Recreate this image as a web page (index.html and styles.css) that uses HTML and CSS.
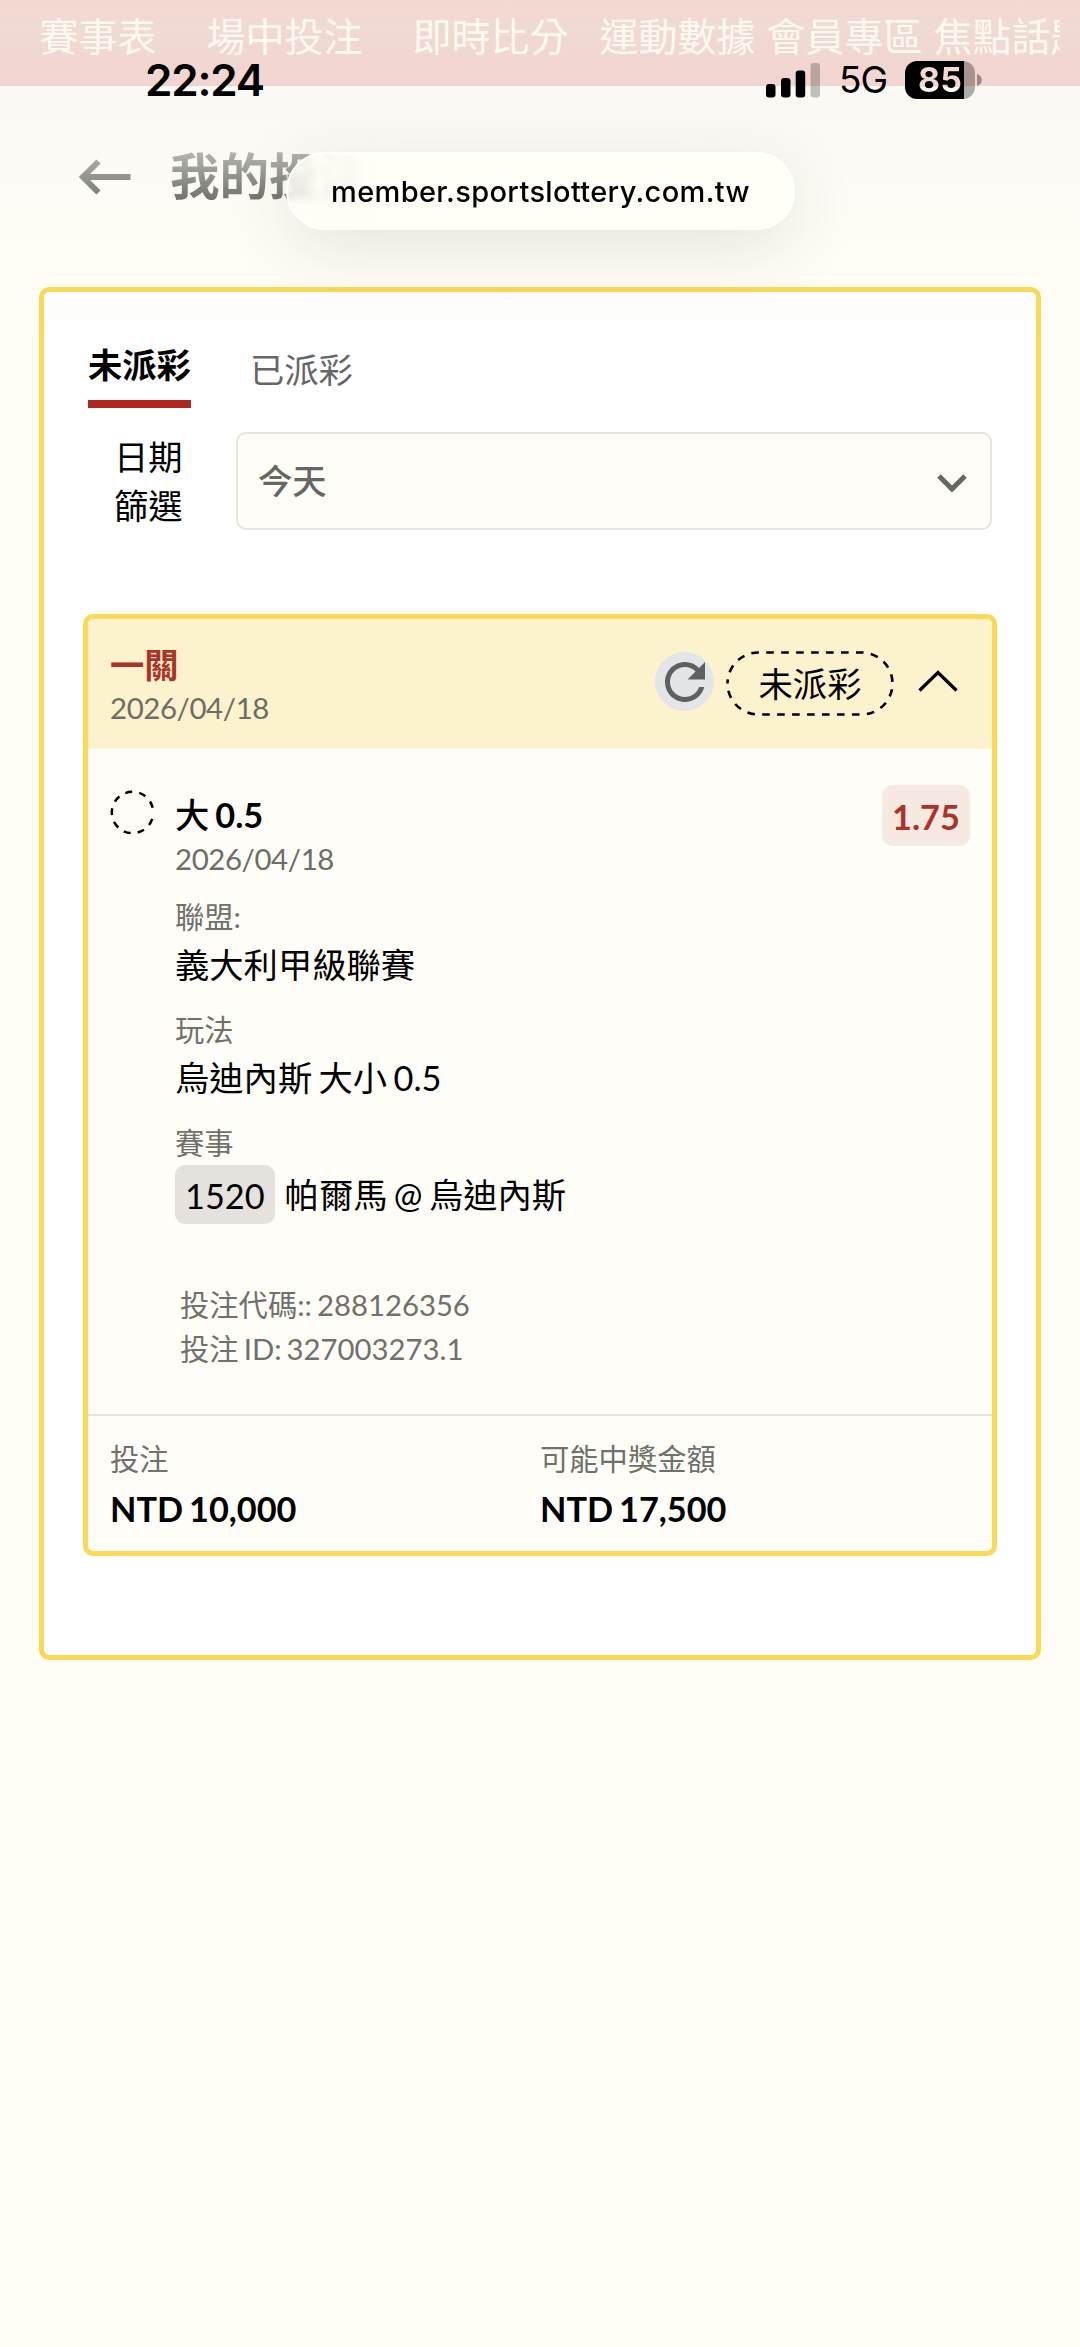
FILE: index.html
```html
<!DOCTYPE html>
<html lang="zh-Hant">
<head>
<meta charset="utf-8">
<title>我的投注</title>
<link rel="stylesheet" href="styles.css">
</head>
<body>
<nav class="site-nav">
  <span class="nav-item">賽事表</span>
  <span class="nav-item">場中投注</span>
  <span class="nav-item">即時比分</span>
  <span class="nav-item">運動數據</span>
  <span class="nav-item">會員專區</span>
  <span class="nav-item">焦點話題</span>
</nav>

<div class="status-bar">
  <span class="clock">22:24</span>
  <div class="status-icons">
    <svg class="signal" viewBox="0 0 55 36"><rect x="0" y="22" width="9.5" height="13.5" rx="3"/><rect x="15" y="16" width="9.5" height="19.5" rx="3"/><rect x="29.7" y="8.500" width="9.500" height="27" rx="3"/><rect x="44.500" y="1" width="9.500" height="34.500" rx="3" opacity=".23"/></svg>
    <span class="network">5G</span>
    <div class="battery"><span class="battery-level">85</span></div>
    <svg class="battery-cap" viewBox="0 0 5 12"><path d="M0 0C6.500 2 6.500 10 0 12Z"/></svg>
  </div>
</div>

<header class="page-head">
  <svg class="back" viewBox="0 0 54 36">
    <defs><linearGradient id="fade" gradientUnits="userSpaceOnUse" x1="0" y1="0" x2="0" y2="36"><stop offset="0" stop-color="#aaa9a6"/><stop offset="1" stop-color="#7f7f7b"/></linearGradient></defs>
    <path d="M20.500 2.500 5 18 20.500 33.500M5 18H52.500" fill="none" stroke="url(#fade)" stroke-width="6"/>
  </svg>
  <h1 class="title">我的投注</h1>
</header>
<div class="url-pill">member.sportslottery.com.tw</div>

<main class="panel">
  <div class="tabs">
    <span class="tab tab-active">未派彩</span>
    <span class="tab">已派彩</span>
  </div>
  <div class="filter">
    <span class="filter-label">日期<br>篩選</span>
    <div class="select">
      <span>今天</span>
      <svg class="select-arrow" viewBox="0 0 30 18"><path d="M2 2 15 15 28 2" fill="none" stroke="#666662" stroke-width="5"/></svg>
    </div>
  </div>

  <section class="ticket">
    <div class="ticket-head">
      <div class="ticket-name">
        <div class="legs">一關</div>
        <div class="date">2026/04/18</div>
      </div>
      <span class="refresh"><svg viewBox="0 0 24 24"><path d="M17.650 6.350C16.200 4.900 14.210 4 12 4c-4.420 0-7.990 3.580-7.990 8s3.570 8 7.990 8c3.730 0 6.840-2.550 7.730-6h-2.080c-.82 2.330-3.040 4-5.650 4-3.310 0-6-2.690-6-6s2.690-6 6-6c1.660 0 3.140.69 4.220 1.780L13 11h7V4l-2.350 2.350z"/></svg></span>
      <span class="state">
        <svg class="state-line" viewBox="0 0 168 65"><path d="M1.500 32.500A31 31 0 0 1 32.500 1.500H135.500A31 31 0 0 1 135.500 63.500H32.500A31 31 0 0 1 1.500 32.500" fill="none" stroke="#000" stroke-width="2.600" stroke-dasharray="7.600 7.360" stroke-dashoffset="3.500"/></svg>
        未派彩</span>
      <svg class="collapse" viewBox="0 0 40 22"><path d="M1.500 20.500 20 2.500 38.500 20.500" fill="none" stroke="#000" stroke-width="3.200"/></svg>
    </div>

    <div class="leg">
      <svg class="leg-mark" viewBox="0 0 45 45"><path d="M42.190 28.900A20.700 20.700 0 1 1 42.670 17.840" pathLength="328" fill="none" stroke="#000" stroke-width="2.500" stroke-dasharray="19 19.600"/></svg>
      <div class="leg-info">
        <div class="pick"><span class="pick-side">大</span> 0.5</div>
        <div class="date">2026/04/18</div>
        <div class="label label-league">聯盟:</div>
        <div class="value">義大利甲級聯賽</div>
        <div class="label">玩法</div>
        <div class="value">烏迪內斯 大小 0.5</div>
        <div class="label">賽事</div>
        <div class="match"><span class="match-no">1520</span><span>帕爾馬 @ 烏迪內斯</span></div>
        <div class="codes">投注代碼:: 288126356<br>投注 ID: 327003273.1</div>
      </div>
      <span class="odds">1.75</span>
    </div>

    <div class="totals">
      <div><div class="label-total">投注</div><div class="amount">NTD 10,000</div></div>
      <div><div class="label-total">可能中獎金額</div><div class="amount">NTD 17,500</div></div>
    </div>
  </section>
</main>
</body>
</html>
```
FILE: styles.css
```css
* { box-sizing: border-box; }

body {
  margin: 0;
  position: relative;
  height: 2347px;
  overflow: hidden;
  background: #fffdf6 linear-gradient(#fbf9f4 86px, #fffdf6 260px);
  color: #000;
  font: 400 34.3px/44px Lato, "Noto Sans CJK TC", sans-serif;
}

svg { display: block; flex: none; }

/* Site navigation */
.site-nav {
  display: flex;
  height: 86px;
  width: 1080px;
  padding: 14px 20px 0 39.500px;
  background: linear-gradient(#f5d8d0, #f0dad4 30%, #f1d7d1 60%, #f2d5d0);
}
.nav-item {
  flex: none;
  margin-right: 50px;
  color: #fdf9f0;
  font-size: 39px;
  line-height: 44px;
  white-space: nowrap;
}
.nav-item:nth-child(3) { margin-right: 31px; }
.nav-item:nth-child(4),
.nav-item:nth-child(5) { margin-right: 11px; }
.nav-item:nth-child(6) { width: 126px; margin-right: 0; overflow: hidden; }

/* Phone status bar */
.status-bar {
  position: absolute;
  top: 58px;
  left: 0;
  width: 1080px;
  padding: 0 98px 0 145px;
  display: flex;
  justify-content: space-between;
  font-family: Inter, sans-serif;
}
.clock { font-size: 44px; font-weight: 600; letter-spacing: -1.200px; }
.status-icons { display: flex; align-items: center; height: 43px; }
.signal { width: 55px; height: 36px; }
.network { margin: 0 18px; font-size: 37px; letter-spacing: -1px; }
.battery {
  width: 70px;
  height: 38px;
  border-radius: 12px;
  background: linear-gradient(90deg, #000 59px, rgba(0, 0, 0, .31) 59px);
  text-align: center;
}
.battery-level {
  display: block;
  background: linear-gradient(#f4d8d2 26px, #fdfbf4 26px);
  background-clip: text;
  -webkit-background-clip: text;
  color: transparent;
  font-size: 34px;
  font-weight: 700;
  line-height: 38px;
}
.battery-cap { width: 5px; height: 12px; margin-left: 2px; opacity: .35; }

/* Page heading and address pill */
.page-head {
  display: flex;
  align-items: center;
  height: 201px;
  padding: 0 0 21px 78px;
}
.back { width: 54px; height: 36px; margin-top: 1px; }
.title {
  margin: 0 0 0 38px;
  background: linear-gradient(#b2b2af 10%, #70706c 95%);
  background-clip: text;
  -webkit-background-clip: text;
  color: transparent;
  font-size: 49.500px;
  font-weight: 700;
  line-height: 56px;
}
.url-pill {
  position: absolute;
  top: 152px;
  left: 286px;
  width: 509px;
  height: 78px;
  border: 2px solid #fff;
  border-radius: 39px;
  background: linear-gradient(90deg, rgba(255, 254, 247, .75), #fffef7 90px);
  backdrop-filter: blur(5px);
  box-shadow: 0 18px 70px rgba(60, 50, 40, .12);
  font: 500 29px/76px Inter, sans-serif;
  letter-spacing: .350px;
  text-align: center;
  white-space: nowrap;
}

/* Main panel */
.panel {
  width: 1002px;
  height: 1373px;
  margin-left: 39px;
  padding: 35px 39px 0;
  border: 5px solid #f9d955;
  border-radius: 10px;
  background: linear-gradient(#fdfdfc, #fff 60px);
}
.tabs { display: flex; gap: 59px; padding: 0 5px; }
.tab { line-height: 44px; padding-top: 21px; color: #666; }
.tab-active {
  height: 81px;
  padding-top: 16px;
  border-bottom: 8px solid #af2820;
  color: #000;
  font-weight: 700;
}
.filter { display: flex; margin-top: 24px; padding-right: 5px; }
.filter-label { width: 153px; padding-left: 31px; line-height: 49px; }
.select {
  flex: 1;
  display: flex;
  align-items: center;
  justify-content: space-between;
  height: 98px;
  padding: 0 23px 0 20px;
  border: 2.500px solid #e8e4de;
  border-radius: 10px;
  background: #fffdf7;
  color: #666662;
  font-weight: 500;
}
.select-arrow { width: 30px; height: 18px; margin-top: 4px; }

/* Bet ticket */
.ticket {
  width: 914px;
  height: 942px;
  margin-top: 84px;
  border: 5px solid #f9d955;
  border-radius: 10px;
  background: #fffdf7;
  overflow: hidden;
  word-spacing: -.07em;
}
.ticket-head {
  display: flex;
  height: 130px;
  padding: 0 34px 0 22px;
  background: #fdf2ce;
}
.ticket-name { flex: 1; padding-top: 24px; }
.legs { color: #ac3327; font-weight: 700; }
.date { color: #6d6d66; font-size: 29.400px; letter-spacing: -.4px; line-height: 42px; }
.refresh {
  width: 59px;
  height: 59px;
  margin-top: 33px;
  border-radius: 50%;
  background: #e4e5e9;
}
.refresh svg { width: 60px; height: 60px; fill: #5f6062; }
.state {
  position: relative;
  width: 168px;
  height: 65px;
  margin: 32px 24px 0 12px;
  line-height: 65px;
  text-align: center;
}
.state-line { position: absolute; inset: 0; width: 168px; height: 65px; }
.collapse { width: 40px; height: 22px; margin-top: 51px; }

.leg { display: flex; height: 665px; padding: 36px 22px 0 22px; }
.leg-mark { width: 45px; height: 45px; margin-top: 5px; }
.leg-info { flex: 1; padding: 8px 0 0 20px; }
.pick { font-weight: 700; }
.pick-side { font-weight: 500; }
.leg-info .date { line-height: 43px; }
.label, .label-total { color: #70706c; font-size: 29.300px; line-height: 44px; }
.label { margin-top: 21px; }
.label-league { margin-top: 15px; }
.value { margin-top: 4px; }
.match { display: flex; align-items: center; gap: 10px; }
.match-no {
  height: 59px;
  padding: 0 10px;
  border-radius: 10px;
  background: #e5e2dd;
  line-height: 61px;
}
.codes {
  margin-top: 59px;
  padding-left: 5px;
  color: #70706c;
  font-size: 29.300px;
}
.odds {
  width: 88px;
  height: 61px;
  border-radius: 10px;
  background: #f5e9e2;
  color: #ac3327;
  font-weight: 700;
  line-height: 63px;
  text-align: center;
}
.totals {
  display: grid;
  grid-template-columns: 430px 1fr;
  padding: 21px 22px 0;
  border-top: 2.500px solid #e6e3de;
}
.amount { margin-top: 6px; font-weight: 700; }
```
